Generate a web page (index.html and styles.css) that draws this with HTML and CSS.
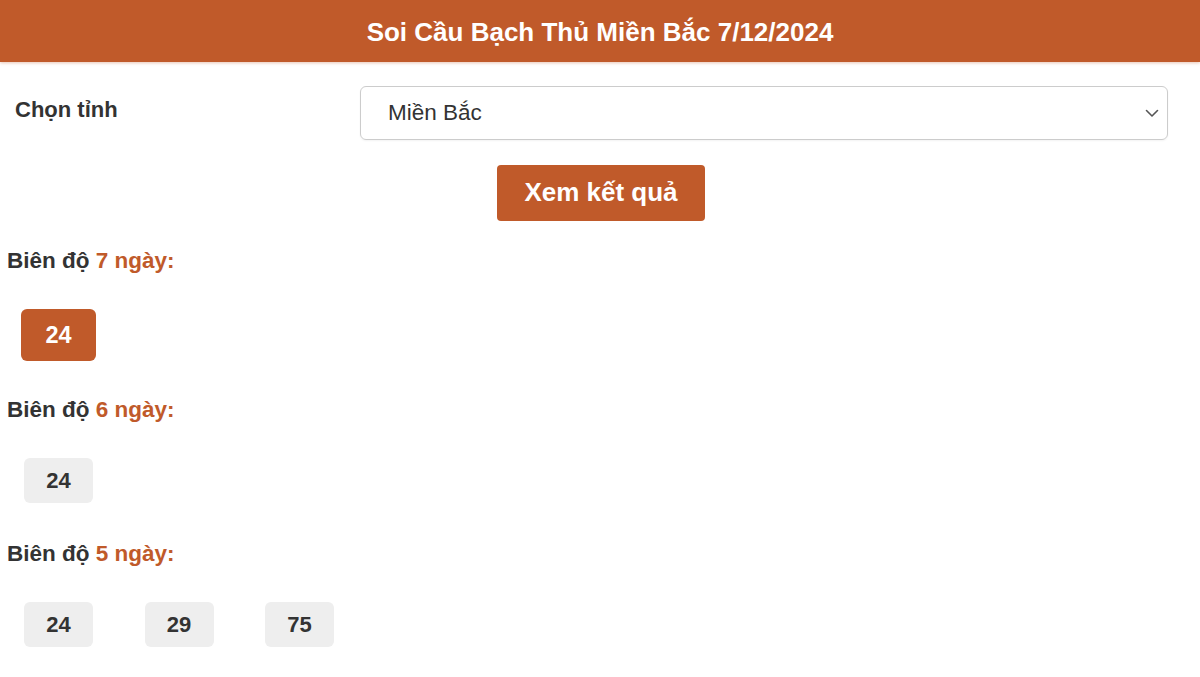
FILE: index.html
```html
<!DOCTYPE html>
<html lang="vi">
<head>
<meta charset="utf-8">
<title>Soi Cầu Bạch Thủ Miền Bắc</title>
<link rel="stylesheet" href="styles.css">
</head>
<body>
  <header class="topbar">
    <h1 class="title">Soi Cầu Bạch Thủ Miền Bắc 7/12/2024</h1>
  </header>

  <div class="form-row">
    <label class="form-label">Chọn tỉnh</label>
    <div class="select">
      <span class="select-value">Miền Bắc</span>
      <svg class="chevron" width="14" height="9" viewBox="0 0 14 9"><path d="M1.5 1.5 L7 7 L12.5 1.5" fill="none" stroke="#555" stroke-width="1.6" stroke-linecap="round" stroke-linejoin="round"/></svg>
    </div>
  </div>

  <div class="btn-row">
    <button class="btn">Xem kết quả</button>
  </div>

  <section class="group">
    <h2 class="group-title">Biên độ <span class="hl">7 ngày:</span></h2>
    <div class="nums nums-active">
      <span class="num num-active">24</span>
    </div>
  </section>

  <section class="group">
    <h2 class="group-title">Biên độ <span class="hl">6 ngày:</span></h2>
    <div class="nums">
      <span class="num">24</span>
    </div>
  </section>

  <section class="group group-last">
    <h2 class="group-title">Biên độ <span class="hl">5 ngày:</span></h2>
    <div class="nums">
      <span class="num">24</span>
      <span class="num">29</span>
      <span class="num">75</span>
    </div>
  </section>
</body>
</html>
```

FILE: styles.css
```css
* { box-sizing: border-box; }

html, body {
  margin: 0;
  padding: 0;
  background: #ffffff;
  font-family: "Liberation Sans", Arial, Helvetica, sans-serif;
  color: #333333;
}

.topbar {
  height: 62px;
  background: #c05a2a;
  display: flex;
  align-items: center;
  justify-content: center;
  box-shadow: 0 1px 3px rgba(192, 90, 42, 0.35);
}

.title {
  margin: 0;
  color: #ffffff;
  font-size: 26px;
  font-weight: bold;
  line-height: 1;
  padding-top: 1px;
}

.form-row {
  display: flex;
  align-items: center;
  margin-top: 24px;
  padding: 0 32px 0 15px;
}

.form-label {
  width: 345px;
  font-size: 22px;
  font-weight: bold;
  color: #333;
  margin-top: -6px;
}

.select {
  flex: 1;
  height: 54px;
  border: 1px solid #cccccc;
  border-radius: 6px;
  display: flex;
  align-items: center;
  justify-content: space-between;
  padding: 0 8px 0 27px;
  box-shadow: 0 1px 2px rgba(0,0,0,0.05);
}

.select-value {
  font-size: 22.5px;
  color: #333;
}

.chevron { display: block; margin-top: 1px; }

.btn-row {
  display: flex;
  justify-content: center;
  margin-top: 25px;
  padding-left: 2px;
}

.btn {
  width: 208px;
  height: 56px;
  border: none;
  border-radius: 4px;
  background: #c05a2a;
  color: #ffffff;
  font-family: "Liberation Sans", Arial, Helvetica, sans-serif;
  font-size: 26px;
  font-weight: bold;
  padding: 0 0 2px 0;
}

.group { padding-left: 7px; }

.group-title {
  margin: 25px 0 0 0;
  font-size: 22.5px;
  font-weight: bold;
  line-height: 30px;
  color: #333;
}

.group + .group .group-title { margin-top: 34px; }
.group + .group-last .group-title { margin-top: 36px; }

.hl { color: #c05a2a; }

.nums {
  display: flex;
  gap: 51.5px;
  margin-top: 33px;
  padding-left: 17px;
}

.nums-active { padding-left: 14px; }

.num {
  width: 69px;
  height: 45px;
  border-radius: 6px;
  background: #eeeeee;
  display: flex;
  align-items: center;
  justify-content: center;
  font-size: 22px;
  font-weight: bold;
  color: #333;
}

.num-active {
  width: 75px;
  height: 52px;
  background: #c05a2a;
  color: #ffffff;
  font-size: 23.5px;
}
```
